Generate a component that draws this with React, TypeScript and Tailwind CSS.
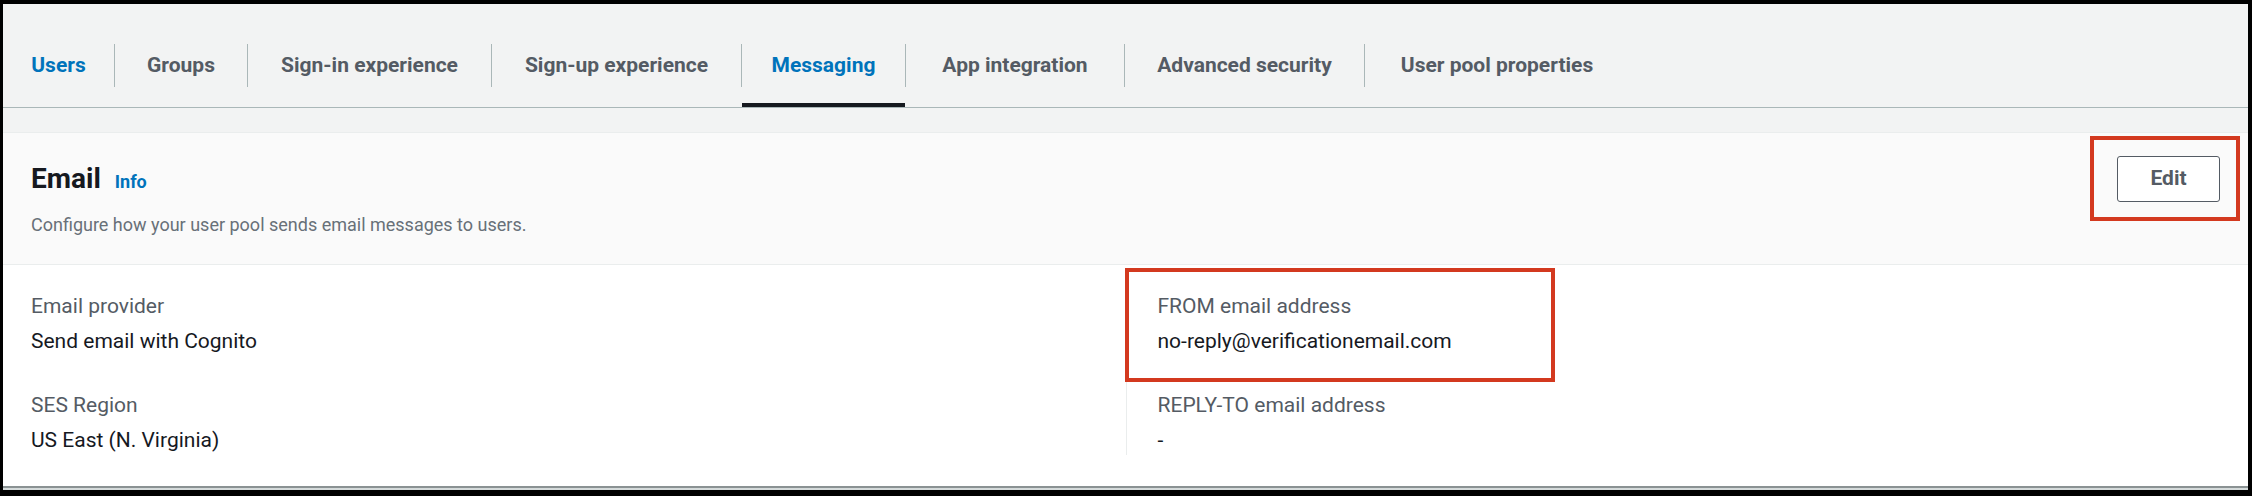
import React from "react";

const tabs = [
  { label: "Users", w: "w-[111px]", color: "text-[#0073bb]" },
  { label: "Groups", w: "w-[132px]", color: "text-[#545b64]" },
  { label: "Sign-in experience", w: "w-[243px]", color: "text-[#545b64]" },
  { label: "Sign-up experience", w: "w-[249px]", color: "text-[#545b64]" },
  { label: "Messaging", w: "w-[163px]", color: "text-[#0073bb]", active: true },
  { label: "App integration", w: "w-[218px]", color: "text-[#545b64]" },
  { label: "Advanced security", w: "w-[239px]", color: "text-[#545b64]" },
  { label: "User pool properties", w: "w-[264px]", color: "text-[#545b64]" },
];

function Field({ label, value, last }: { label: string; value: string; last?: boolean }) {
  return (
    <div className={last ? "" : "mb-[34px]"}>
      <div className="mb-[5px] text-[21px] leading-[30px] text-[#545b64]">{label}</div>
      <div className="text-[21px] leading-[30px] text-[#16191f]">{value}</div>
    </div>
  );
}

export default function App() {
  return (
    <div className="flex h-[496px] w-[2252px] flex-col border-t-4 border-r-4 border-b-[6px] border-l-[3px] border-black bg-[#f2f3f3] font-['Roboto',sans-serif]">
      {/* Tabs */}
      <div className="flex border-b border-[#aab7b8] pt-[40px]">
        {tabs.map((t, i) => (
          <React.Fragment key={t.label}>
            {i > 0 && <div className="h-[43px] w-px bg-[#aab7b8]" />}
            <div className={`relative h-[63px] ${t.w} shrink-0`}>
              <div className={`flex h-[43px] items-center justify-center text-[21px] font-bold leading-[43px] ${t.color}`}>
                {t.label}
              </div>
              {t.active && <div className="absolute right-0 bottom-0 left-0 h-[4px] bg-[#16191f]" />}
            </div>
          </React.Fragment>
        ))}
      </div>

      {/* Container */}
      <div className="mt-[24px] flex flex-1 flex-col border-t border-[#eaeded]">
        <div className="border-b border-[#eaeded] bg-[#fafafa] px-[28px] pt-[23px] pb-[26px]">
          <div className="flex h-[46px] items-center justify-between">
            <div className="flex items-baseline gap-[14px]">
              <h2 className="text-[28px] font-bold leading-[34px] text-[#16191f]">Email</h2>
              <span className="text-[18px] font-bold text-[#0073bb]">Info</span>
            </div>
            <div className="relative">
              <button className="h-[46px] w-[103px] rounded-[3px] border border-[#545b64] bg-white text-[21px] font-bold text-[#545b64]">
                Edit
              </button>
              <div className="pointer-events-none absolute -top-[20px] -right-[20px] -bottom-[19px] -left-[27px] border-4 border-[#d3391f]" />
            </div>
          </div>
          <p className="mt-[9px] text-[18px] leading-[27px] text-[#687078]">
            Configure how your user pool sends email messages to users.
          </p>
        </div>

        <div className="flex-1 border-b-2 border-[#8a9293] bg-white px-[28px] pt-[26px]">
          <div className="grid grid-cols-2">
            <div>
              <Field label="Email provider" value="Send email with Cognito" />
              <Field label="SES Region" value="US East (N. Virginia)" last />
            </div>
            <div className="border-l border-[#eaeded] pl-[31px]">
              <div className="relative">
                <Field label="FROM email address" value="no-reply@verificationemail.com" />
                <div className="pointer-events-none absolute -top-[23px] left-[-33px] h-[114px] w-[430px] border-4 border-[#d3391f]" />
              </div>
              <Field label="REPLY-TO email address" value="-" last />
            </div>
          </div>
        </div>
        <div className="h-[2px] bg-[#d5dbdb]" />
      </div>
    </div>
  );
}
